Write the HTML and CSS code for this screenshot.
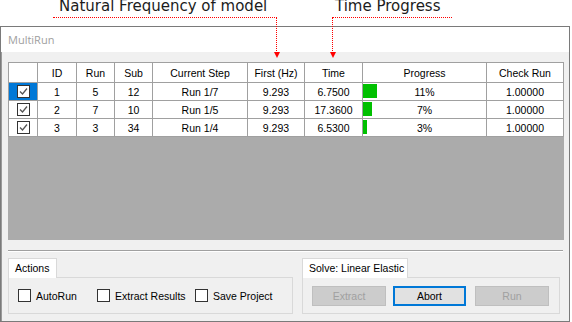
FILE: index.html
```html
<!DOCTYPE html>
<html>
<head>
<meta charset="utf-8">
<link rel="stylesheet" href="styles.css">
</head>
<body>
<div class="page">
  <div class="window">
    <div class="titlebar">MultiRun</div>
    <div class="content">
      <div class="gridarea">
        <div class="grid">
          <div class="hd"></div><div class="hd">ID</div><div class="hd">Run</div><div class="hd">Sub</div><div class="hd">Current Step</div><div class="hd">First (Hz)</div><div class="hd">Time</div><div class="hd">Progress</div><div class="hd">Check Run</div>

          <div class="cell sel"><span class="cb checked"><svg width="11" height="11" viewBox="0 0 11 11"><polyline points="2,5.5 4.5,8 9,2.5" fill="none" stroke="#555" stroke-width="1.3"/></svg></span></div><div class="cell">1</div><div class="cell">5</div><div class="cell">12</div><div class="cell">Run 1/7</div><div class="cell">9.293</div><div class="cell">6.7500</div><div class="cell prog"><span class="bar" style="width:14px"></span><span class="pt">11%</span></div><div class="cell">1.00000</div>

          <div class="cell"><span class="cb checked"><svg width="11" height="11" viewBox="0 0 11 11"><polyline points="2,5.5 4.5,8 9,2.5" fill="none" stroke="#555" stroke-width="1.3"/></svg></span></div><div class="cell">2</div><div class="cell">7</div><div class="cell">10</div><div class="cell">Run 1/5</div><div class="cell">9.293</div><div class="cell">17.3600</div><div class="cell prog"><span class="bar" style="width:9px"></span><span class="pt">7%</span></div><div class="cell">1.00000</div>

          <div class="cell"><span class="cb checked"><svg width="11" height="11" viewBox="0 0 11 11"><polyline points="2,5.5 4.5,8 9,2.5" fill="none" stroke="#555" stroke-width="1.3"/></svg></span></div><div class="cell">3</div><div class="cell">3</div><div class="cell">34</div><div class="cell">Run 1/4</div><div class="cell">9.293</div><div class="cell">6.5300</div><div class="cell prog"><span class="bar" style="width:4px"></span><span class="pt">3%</span></div><div class="cell">1.00000</div>
        </div>
      </div>
      <div class="sep"></div>
      <div class="panels">
        <div class="tabpanel actions">
          <div class="tab">Actions</div>
          <div class="tabbody">
            <label class="chk"><span class="cb"></span>AutoRun</label>
            <label class="chk"><span class="cb"></span>Extract Results</label>
            <label class="chk"><span class="cb"></span>Save Project</label>
          </div>
        </div>
        <div class="tabpanel solve">
          <div class="tab">Solve: Linear Elastic</div>
          <div class="tabbody">
            <div class="btn disabled">Extract</div>
            <div class="btn focus">Abort</div>
            <div class="btn disabled">Run</div>
          </div>
        </div>
      </div>
    </div>
  </div>

  <div class="annot a1">Natural Frequency of model</div>
  <div class="hline l1"></div>
  <div class="vline v1"></div>
  <div class="arrow r1"></div>

  <div class="annot a2">Time Progress</div>
  <div class="hline l2"></div>
  <div class="vline v2"></div>
  <div class="arrow r2"></div>
</div>
</body>
</html>
```

FILE: styles.css
```css
* { box-sizing: border-box; }
html, body { margin: 0; padding: 0; background: #fff; }
body { width: 572px; height: 322px; overflow: hidden; font-family: "Liberation Sans", Arial, sans-serif; font-size: 10.5px; color: #000; }
.page { position: relative; padding-top: 26px; }

.window { width: 570px; height: 296px; border: 1px solid #7a7a7a; box-shadow: inset 1px 0 0 #9a9a9a; background: #f0f0f0; display: flex; flex-direction: column; }
.titlebar { height: 25px; background: #fff; color: #a0a0a0; font-family: "Open Sans", sans-serif; font-size: 11px; padding-left: 7px; line-height: 25px; }
.content { flex: 1; padding: 10px 0 0 7px; }

.gridarea { width: 556px; height: 178px; background: #ababab; }
.grid { display: grid; grid-template-columns: 29px 39px 38px 38px 95px 57px 58px 124px 77px; grid-template-rows: 20px 18px 18px 18px; border-left: 1px solid #a0a0a0; border-top: 1px solid #a0a0a0; }
.hd, .cell { background: #fff; border-right: 1px solid #a0a0a0; border-bottom: 1px solid #a0a0a0; display: flex; align-items: center; justify-content: center; white-space: nowrap; }
.cell.sel { background: #0078d7; }
.cb { width: 13px; height: 13px; border: 1px solid #333; background: #fff; display: inline-flex; align-items: center; justify-content: center; flex: none; }
.prog { position: relative; }
.bar { position: absolute; left: 0; top: 1px; height: 14px; background: #00c000; }
.pt { position: relative; }

.sep { width: 555px; margin-top: 10px; border-top: 1px solid #a0a0a0; border-bottom: 1px solid #fff; }

.panels { display: flex; gap: 9px; margin-top: 5px; }
.tabpanel { display: flex; flex-direction: column; }
.actions { width: 285px; }
.solve { width: 258px; }
.tab { align-self: flex-start; height: 20px; background: #fff; border: 1px solid #d9d9d9; border-bottom: none; padding: 0 6px; line-height: 19px; position: relative; top: 1px; white-space: nowrap; }
.actions .tab { width: 49px; }
.solve .tab { width: 106px; }
.tabbody { height: 37px; border: 1px solid #d9d9d9; background: #f0f0f0; display: flex; align-items: center; }
.actions .tabbody { padding-left: 9px; gap: 0; }
.chk { display: flex; align-items: center; gap: 5px; white-space: nowrap; }
.chk:nth-child(1) { width: 79px; }
.chk:nth-child(2) { width: 98px; }
.solve .tabbody { padding-left: 9px; gap: 7px; }
.btn { width: 74px; height: 20px; display: flex; align-items: center; justify-content: center; border: 1px solid #adadad; background: #e1e1e1; }
.btn.disabled { background: #cccccc; border-color: #bfbfbf; color: #a0a0a0; }
.btn.focus { width: 73px; margin-right: 2px; border-color: #0078d7; box-shadow: inset 0 0 0 1px #0078d7; }

.annot { position: absolute; top: 0; font-family: "DejaVu Sans", sans-serif; font-size: 15px; line-height: 13px; color: #1c1c1c; white-space: nowrap; }
.a1 { left: 59px; }
.a2 { left: 335px; }
.hline { position: absolute; top: 17px; height: 0; border-top: 1px dotted #ff0000; }
.vline { position: absolute; top: 17px; width: 0; height: 36px; border-left: 1px dotted #ff0000; }
.l1 { left: 53px; width: 224px; }
.v1 { left: 276px; }
.l2 { left: 332px; width: 120px; }
.v2 { left: 332px; }
.arrow { position: absolute; top: 52px; width: 0; height: 0; border-left: 3px solid transparent; border-right: 3px solid transparent; border-top: 6px solid #ff0000; }
.r1 { left: 273.5px; }
.r2 { left: 329.5px; }
```
